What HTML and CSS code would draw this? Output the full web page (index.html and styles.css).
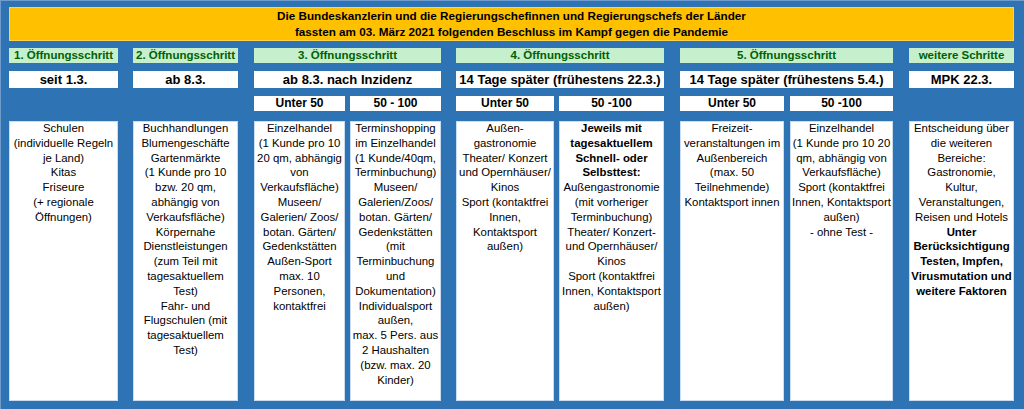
FILE: index.html
```html
<!DOCTYPE html>
<html lang="de">
<head>
<meta charset="utf-8">
<title>Öffnungsschritte</title>
<link rel="stylesheet" href="styles.css">
</head>
<body>
<div class="board">
  <div class="banner">Die Bundeskanzlerin und die Regierungschefinnen und Regierungschefs der Länder<br>fassten am 03. März 2021 folgenden Beschluss im Kampf gegen die Pandemie</div>

  <div class="step c1">1. Öffnungsschritt</div>
  <div class="step c2">2. Öffnungsschritt</div>
  <div class="step c3">3. Öffnungsschritt</div>
  <div class="step c4">4. Öffnungsschritt</div>
  <div class="step c5">5. Öffnungsschritt</div>
  <div class="step c6">weitere Schritte</div>

  <div class="date c1">seit 1.3.</div>
  <div class="date c2">ab 8.3.</div>
  <div class="date c3">ab 8.3. nach Inzidenz</div>
  <div class="date c4">14 Tage später (frühestens 22.3.)</div>
  <div class="date c5">14 Tage später (frühestens 5.4.)</div>
  <div class="date c6">MPK 22.3.</div>

  <div class="sub c3a">Unter 50</div>
  <div class="sub c3b">50 - 100</div>
  <div class="sub c4a">Unter 50</div>
  <div class="sub c4b">50 -100</div>
  <div class="sub c5a">Unter 50</div>
  <div class="sub c5b">50 -100</div>

  <div class="cell c1">Schulen<br>(individuelle Regeln<br>je Land)<br>Kitas<br>Friseure<br>(+ regionale<br>Öffnungen)</div>
  <div class="cell c2">Buchhandlungen<br>Blumengeschäfte<br>Gartenmärkte<br>(1 Kunde pro 10<br>bzw. 20 qm,<br>abhängig von<br>Verkaufsfläche)<br>Körpernahe<br>Dienstleistungen<br>(zum Teil mit<br>tagesaktuellem<br>Test)<br>Fahr- und<br>Flugschulen (mit<br>tagesaktuellem<br>Test)</div>
  <div class="cell c3a">Einzelhandel<br>(1 Kunde pro 10<br>20 qm, abhängig<br>von<br>Verkaufsfläche)<br>Museen/<br>Galerien/ Zoos/<br>botan. Gärten/<br>Gedenkstätten<br>Außen-Sport<br>max. 10<br>Personen,<br>kontaktfrei</div>
  <div class="cell c3b">Terminshopping<br>im Einzelhandel<br>(1 Kunde/40qm,<br>Terminbuchung)<br>Museen/<br>Galerien/Zoos/<br>botan. Gärten/<br>Gedenkstätten<br>(mit<br>Terminbuchung<br>und<br>Dokumentation)<br>Individualsport<br>außen,<br>max. 5 Pers. aus<br>2 Haushalten<br>(bzw. max. 20<br>Kinder)</div>
  <div class="cell c4a">Außen-<br>gastronomie<br>Theater/ Konzert<br>und Opernhäuser/<br>Kinos<br>Sport (kontaktfrei<br>Innen,<br>Kontaktsport<br>außen)</div>
  <div class="cell c4b"><strong>Jeweils mit<br>tagesaktuellem<br>Schnell- oder<br>Selbsttest:</strong><br>Außengastronomie<br>(mit vorheriger<br>Terminbuchung)<br>Theater/ Konzert-<br>und Opernhäuser/<br>Kinos<br>Sport (kontaktfrei<br>Innen, Kontaktsport<br>außen)</div>
  <div class="cell c5a">Freizeit-<br>veranstaltungen im<br>Außenbereich<br>(max. 50<br>Teilnehmende)<br>Kontaktsport innen</div>
  <div class="cell c5b">Einzelhandel<br>(1 Kunde pro 10 20<br>qm, abhängig von<br>Verkaufsfläche)<br>Sport (kontaktfrei<br>Innen, Kontaktsport<br>außen)<br>- ohne Test -</div>
  <div class="cell c6">Entscheidung über<br>die weiteren<br>Bereiche:<br>Gastronomie,<br>Kultur,<br>Veranstaltungen,<br>Reisen und Hotels<br><strong>Unter<br>Berücksichtigung<br>Testen, Impfen,<br>Virusmutation und<br>weitere Faktoren</strong></div>
</div>
</body>
</html>
```
FILE: styles.css
```css
html, body {
  margin: 0;
  padding: 0;
}
body {
  background: #2e74b5;
  width: 1024px;
  height: 409px;
  box-sizing: border-box;
  border-top: 1px solid #6f9ccc;
  border-left: 1px solid #6f9ccc;
  padding: 6px 10px 8px 8px;
  font-family: "Liberation Sans", Arial, sans-serif;
  color: #000;
  overflow: hidden;
}
.board {
  display: grid;
  grid-template-columns:
    [c1] 109px 15px [c2] 105px 16px [c3] 91px 5px [c3b] 91px 15px
    [c4] 98px 5px [c4b] 105px 16px [c5] 104px 6px [c5b] 103px 16px [c6] 105px [end];
  grid-template-rows:
    [banner] 34px 7px [step] 15px 8px [date] 17px 8px [sub] 15px 10px [cell] 280px;
}
.banner {
  grid-column: c1 / end;
  grid-row: banner;
  background: #ffc000;
  box-shadow: inset 0 0 0 1px #ffd24d;
  font-weight: bold;
  font-size: 11.7px;
  line-height: 16px;
  text-align: center;
  padding-top: 1px;
  box-sizing: border-box;
}
.step {
  grid-row: step;
  background: #c6efce;
  color: #006100;
  font-weight: bold;
  font-size: 11.5px;
  line-height: 15px;
  text-align: center;
  white-space: nowrap;
}
.date {
  grid-row: date;
  background: #fff;
  font-weight: bold;
  font-size: 13px;
  line-height: 17px;
  text-align: center;
  white-space: nowrap;
}
.sub {
  grid-row: sub;
  background: #fff;
  font-weight: bold;
  font-size: 12px;
  line-height: 15px;
  text-align: center;
  white-space: nowrap;
}
.cell {
  grid-row: cell;
  background: #fff;
  box-shadow: inset 0 0 0 1px #c9dcf0;
  font-size: 11.4px;
  line-height: 14.8px;
  text-align: center;
  white-space: nowrap;
}
.c1 { grid-column: c1 / span 1; }
.c2 { grid-column: c2 / span 1; }
.c3 { grid-column: c3 / span 3; }
.c3a { grid-column: c3 / span 1; }
.c3b { grid-column: c3b / span 1; }
.c4 { grid-column: c4 / span 3; }
.c4a { grid-column: c4 / span 1; }
.c4b { grid-column: c4b / span 1; }
.c5 { grid-column: c5 / span 3; }
.c5a { grid-column: c5 / span 1; }
.c5b { grid-column: c5b / span 1; }
.c6 { grid-column: c6 / span 1; }
```
